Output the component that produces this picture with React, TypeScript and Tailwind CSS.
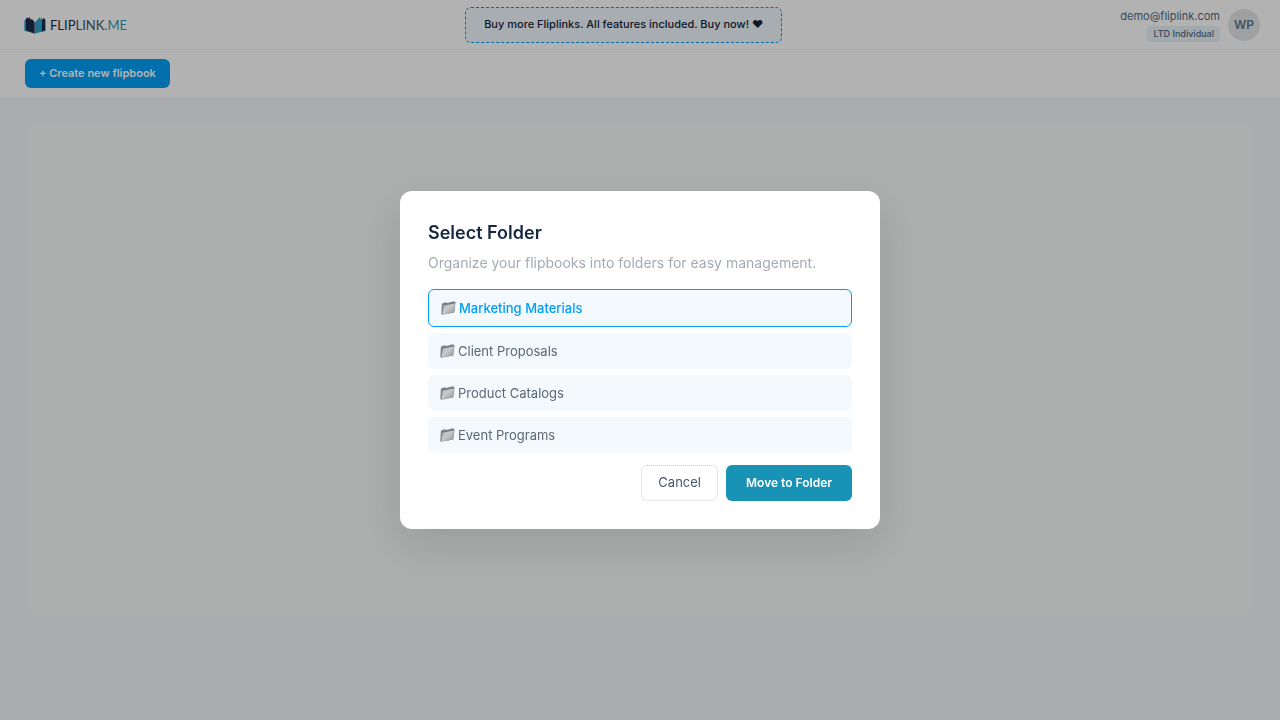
import { useState } from "react"

const folders = ["Marketing Materials", "Client Proposals", "Product Catalogs", "Event Programs"]

function FolderIcon() {
  return (
    <svg viewBox="0 0 16 16" className="w-4 h-4 shrink-0" aria-hidden="true">
      <defs>
        <linearGradient id="folderFront" x1="0" y1="0" x2="1" y2="1">
          <stop offset="0" stopColor="#b0b4b7" />
          <stop offset="0.45" stopColor="#c9c9c9" />
          <stop offset="1" stopColor="#8c8c8c" />
        </linearGradient>
      </defs>
      <path d="M.8 4.400 1.800 3l3.400-.7.9.6L12.800 1.300l1.200.8.5 1-1.200 9.400L1.300 14.800.3 14z" fill="#7d858c" />
      <path d="M2.800 5.200 14.200 3l-1.200 9.400L1.300 14.600z" fill="url(#folderFront)" />
      <path d="M2.600 5.200 14.200 2.900" stroke="#66717b" strokeWidth="0.8" fill="none" />
      <path d="M2.600 5.600 1.200 14" stroke="#8f979d" strokeWidth="0.6" fill="none" />
    </svg>
  )
}

function Logo() {
  return (
    <a href="#" aria-label="Fliplink.me" className="flex items-center gap-1">
      <svg viewBox="0 0 66 54" className="w-[22px] h-[18px]" aria-hidden="true">
        <path d="M1 13 7 9v34l24 9-26-6-4-2z" fill="#1fa3cb" />
        <path d="M65 13l-6-4v34l-26 9 27-6 5-2z" fill="#1fa3cb" />
        <path d="M6 8l4-4 3 5 3-7 4 9 4-2 8 10v34L6 43z" fill="#1b2b4b" />
        <path d="M33 19 47 4l2 6 4-8v43l-20 8z" fill="#22a6cf" />
        <path d="M53 12l7-6 3 4v33l-10 4z" fill="#1b2b4b" />
        <path d="M38 20v28M43 14v30M48 12v32" stroke="#6f9cb0" strokeWidth="2" strokeDasharray="3 4" />
      </svg>
      <span className="font-[Lato,sans-serif] text-[13px] leading-5 text-[#1b2b4b]">
        FLIP<span className="text-[#46566f]">LINK</span>
        <span className="text-[#359dbd]">.ME</span>
      </span>
    </a>
  )
}

export default function App() {
  const [selected, setSelected] = useState("Marketing Materials")

  return (
    <div className="min-h-screen flex flex-col bg-[#f5f6fa] font-['Inter',sans-serif] text-[#15263f]">
      <header className="bg-white border-b border-[#f0f1f3] h-[50px] pl-6 pr-5 flex items-center justify-between">
        <Logo />
        <button className="h-9 px-[18px] rounded-md border border-dashed border-[#009ff5] bg-[#f0f8fc] text-[11px] font-medium">
          Buy more Fliplinks. All features included. Buy now! ❤︎
        </button>
        <div className="flex items-center gap-2">
          <div className="flex flex-col items-end gap-0.5">
            <span className="text-[11px] leading-4 text-[#536c85]">demo@fliplink.com</span>
            <span className="px-1.5 rounded bg-[#e8f4fa] text-[9px] leading-4 font-medium text-[#4f6b85]">
              LTD Individual
            </span>
          </div>
          <div className="w-8 h-8 rounded-full bg-[#e4e6e9] flex items-center justify-center text-xs font-semibold text-[#5d7690]">
            WP
          </div>
        </div>
      </header>

      <div className="bg-white border-b border-[#f0f1f3] h-12 px-[25px] flex items-center">
        <button className="h-[29px] px-3.5 rounded-md bg-[#009ff5] text-white text-[11px] font-semibold">
          + Create new flipbook
        </button>
      </div>

      <main className="flex-1 flex px-[27px] py-6">
        <div className="flex-1 mb-20 rounded-lg bg-[#f7faf8]" />
      </main>

      <div className="fixed inset-0 bg-black/30 flex items-center justify-center p-4">
        <form
          role="dialog"
          aria-modal="true"
          aria-labelledby="dialog-title"
          onSubmit={(e) => e.preventDefault()}
          className="w-full max-w-[480px] p-7 rounded-xl bg-white shadow-[0_16px_40px_rgba(20,20,40,0.12)]"
        >
          <h2 id="dialog-title" className="text-lg leading-7 font-semibold">
            Select Folder
          </h2>
          <p className="mt-1.5 text-sm leading-5 text-[#a3abb5]">
            Organize your flipbooks into folders for easy management.
          </p>
          <div className="mt-4 flex flex-col gap-1.5">
            {folders.map((folder) => (
              <button
                key={folder}
                type="button"
                aria-pressed={selected === folder}
                onClick={() => setSelected(folder)}
                className={`flex items-center gap-0.5 px-3 py-2 rounded-md bg-[#f3f9fc] text-[13px] leading-5 ${
                  selected === folder
                    ? "border border-[#009ff5] text-[#009ff5] font-medium"
                    : "text-[#5b6776]"
                }`}
              >
                <FolderIcon />
                {folder}
              </button>
            ))}
          </div>
          <div className="mt-3 flex justify-end gap-2">
            <button type="button" className="h-9 px-4 rounded-md border border-dotted border-[#c3ccd6] text-[13px] text-[#45556a]">
              Cancel
            </button>
            <button type="submit" className="h-9 px-5 rounded-md bg-[#1892b5] text-white text-xs font-semibold">
              Move to Folder
            </button>
          </div>
        </form>
      </div>
    </div>
  )
}
